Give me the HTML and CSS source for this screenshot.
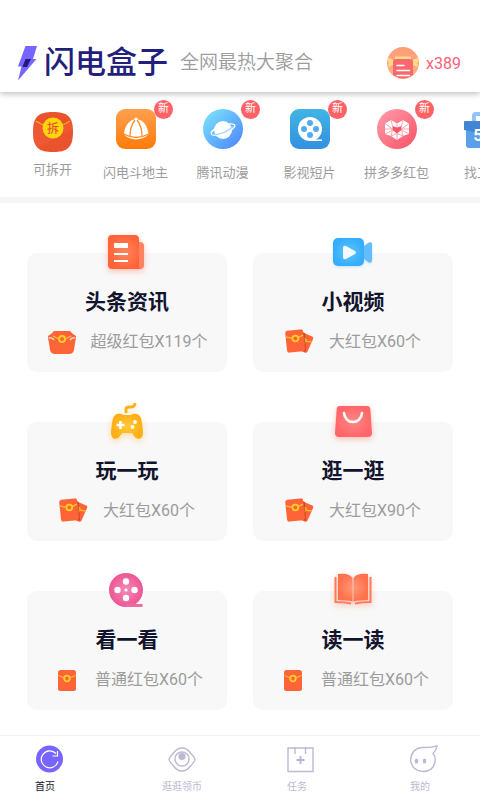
FILE: index.html
```html
<!DOCTYPE html>
<html lang="zh-CN">
<head>
<meta charset="utf-8">
<meta name="viewport" content="width=device-width, initial-scale=1">
<title>闪电盒子</title>
<link rel="stylesheet" href="styles.css">
</head>
<body>
<svg class="defs" aria-hidden="true">
  <defs>
    <linearGradient id="orange" x2="0" y2="1"><stop stop-color="#ffa04f"/><stop offset="1" stop-color="#ff7b08"/></linearGradient>
    <linearGradient id="sky" x2="1" y2="1"><stop stop-color="#7ce8fb"/><stop offset="1" stop-color="#4b82fc"/></linearGradient>
    <linearGradient id="blue" x2="0" y2="1"><stop stop-color="#41b4e5"/><stop offset="1" stop-color="#3390df"/></linearGradient>
    <linearGradient id="rose" x2="1" y2="1"><stop stop-color="#ff9eac"/><stop offset="1" stop-color="#fb5065"/></linearGradient>
    <linearGradient id="peach" x2="0" y2="1"><stop stop-color="#ff9b79"/><stop offset="1" stop-color="#ffb482"/></linearGradient>
    <radialGradient id="news"><stop stop-color="#ff8560"/><stop offset="1" stop-color="#ff6338"/></radialGradient>
    <radialGradient id="video"><stop stop-color="#5cc6ff"/><stop offset="1" stop-color="#35adfb"/></radialGradient>
    <radialGradient id="pad"><stop stop-color="#ffc935"/><stop offset="1" stop-color="#ffae16"/></radialGradient>
    <radialGradient id="bag"><stop stop-color="#ff8785"/><stop offset="1" stop-color="#ff6669"/></radialGradient>
    <radialGradient id="reel"><stop stop-color="#f58bb4"/><stop offset="1" stop-color="#ed5594"/></radialGradient>
    <radialGradient id="book"><stop stop-color="#ff9a78"/><stop offset="1" stop-color="#ff704b"/></radialGradient>
    <symbol id="packet" viewBox="0 0 18 21">
      <rect width="18" height="21" rx="2.5" fill="#ff6338"/>
      <path d="M.5 5.5Q9 10 17.500 5.500" fill="none" stroke="#fdbf2d" stroke-width="1.300"/>
      <circle cx="9" cy="8.500" r="2.800" fill="#ff6338" stroke="#ffcf27" stroke-width="1.800"/>
    </symbol>
    <symbol id="packets" viewBox="1 1 32 26">
      <g transform="translate(18 4) rotate(24) scale(.72 .84)"><rect width="18" height="21" rx="2.500" fill="#ff6338"/><path d="M0 6Q9 10 18 6" fill="none" stroke="#fdbf2d" stroke-width="1.300"/><circle cx="7" cy="8.500" r="2.800" fill="none" stroke="#ffcf27" stroke-width="1.800"/></g>
      <path d="M18 4l3 1 1 18-2 1z" fill="#a83b24" opacity=".6"/>
      <g transform="translate(1 3) rotate(-6)"><rect width="18" height="22" rx="2.500" fill="#ff6338"/><path d="M.5 6Q9 10.500 17.500 6" fill="none" stroke="#fdbf2d" stroke-width="1.300"/><circle cx="9.500" cy="8.500" r="2.900" fill="#ff6338" stroke="#ffcf27" stroke-width="1.800"/></g>
    </symbol>
  </defs>
</svg>

<header class="header">
  <svg class="bolt" viewBox="0 0 20 35" aria-hidden="true"><path d="M7.500 0H19l-4 13h3.500L0 34.500 3.500 20.500H0z" fill="#7865ff"/><path d="M7.500 13H13l-4 8H4.500z" fill="#211b79"/></svg>
  <h1 class="brand">闪电盒子</h1>
  <p class="tagline">全网最热大聚合</p>
  <a class="wallet" href="#wallet">
    <svg viewBox="0 0 32 32" width="32" height="32" aria-hidden="true"><circle cx="16" cy="16" r="16" fill="url(#peach)"/><path d="M8 9.500h16V14l4-2 3.500-1.500v4L30 16.500l1.500 3.500-3.500-1-4-2H8l-4 2-3.500 1L2 16.500.5 14.500v-4L4 12l4 2z" fill="#ffd98a"/><path d="M6 15a3 3 0 0 1 3-3h14a3 3 0 0 1 3 3v13q-10 7-20 0z" fill="#f8686d"/><path d="M10 18.500h7M10 23.500h12.500M10 28.500h12.500" stroke="#fff" stroke-width="1.500" stroke-linecap="round"/></svg>
    <span>x389</span>
  </a>
</header>

<nav class="shortcuts" aria-label="快捷入口">
  <a class="shortcut shortcut-first" href="#open">
    <svg class="app" viewBox="0 0 40 40" aria-hidden="true"><path d="M20 0C34 0 40 4 40 20s-6 20-20 20S0 36 0 20 6 0 20 0z" fill="#e9532d"/><path d="M2 10l18 11 18-11q2 4 2 8L27 24 5 36Q0 30 0 20q0-6 2-10z" fill="#f4623b" opacity=".4"/><path d="M3 9q17 12 34 0" fill="none" stroke="#fcad15" stroke-width="1.500"/><circle cx="20" cy="16" r="10.500" fill="#ffd60c"/><text x="20" y="20.500" font-size="12" font-weight="500" text-anchor="middle" fill="#e9532d">拆</text></svg>
    <span>可拆开</span>
  </a>
  <a class="shortcut" href="#ddz">
    <svg class="app" viewBox="0 0 40 40" aria-hidden="true"><rect width="40" height="40" rx="9" fill="url(#orange)"/><path d="M8 25.500C8 17 14 11 18 10.500c0-2.500 4-2.500 4 0C27 11 32 17 32.500 25.500 25 32 15 32 8 25.500z" fill="#fff"/><path d="M8 25q12 7 24.500 0M14 27c0-7 2-12 5-16M26 27c0-7-2-12-5-16" fill="none" stroke="#ff8d24" stroke-width="1.300"/></svg>
    <em class="badge">新</em><span>闪电斗地主</span>
  </a>
  <a class="shortcut" href="#comic">
    <svg class="app" viewBox="0 0 40 40" aria-hidden="true"><circle cx="20" cy="20" r="20" fill="url(#sky)"/><ellipse cx="20" cy="20.500" rx="12.500" ry="4" transform="rotate(-20 20 20.500)" fill="none" stroke="#fff" stroke-width="1.300"/><circle cx="20" cy="21" r="9" fill="#fff"/><path d="M9 25.500q11 1 21-8" fill="none" stroke="#a7d6fc" stroke-width="1.200"/></svg>
    <em class="badge">新</em><span>腾讯动漫</span>
  </a>
  <a class="shortcut" href="#film">
    <svg class="app" viewBox="0 0 40 40" aria-hidden="true"><rect width="40" height="40" rx="9" fill="url(#blue)"/><circle cx="20" cy="20" r="12" fill="#fff"/><path d="M20 31.200h12" stroke="#fff" stroke-width="1.600"/><g fill="#52aaf1"><circle cx="20" cy="14" r="3"/><circle cx="20" cy="26" r="3"/><circle cx="14" cy="20" r="3"/><circle cx="26" cy="20" r="3"/></g></svg>
    <em class="badge">新</em><span>影视短片</span>
  </a>
  <a class="shortcut" href="#pdd">
    <svg class="app" viewBox="0 0 40 40" aria-hidden="true"><circle cx="20" cy="20" r="20" fill="url(#rose)"/><path d="M8 14.500l6-3.500 6 3.500 6-3.500 6 3.500V25l-6 2-6 4-6-4-6-2z" fill="#fff"/><path d="M15.500 17l4.500 1.500 4.500-1.500v4L20 24.500 15.500 21z" fill="#f95468"/><path d="M8 20h7.500L8 14.500M32 20h-7.500L32 14.500M14 11l1.500 6M26 11l-1.500 6M8 25l7.500-4L14 27l6-2.500 6 2.500-1.500-6 7.500 4M20 14.500v4M20 24.500V31" fill="none" stroke="#fc8f9d" stroke-width=".8"/></svg>
    <em class="badge">新</em><span>拼多多红包</span>
  </a>
  <a class="shortcut" href="#job">
    <svg class="app" viewBox="0 0 40 40" aria-hidden="true"><path d="M10 12V7q0-2 2-2h16q2 0 2 2v5" fill="none" stroke="#91c4fa" stroke-width="4"/><path d="M2 14h36v22q0 3-3 3H5q-3 0-3-3z" fill="#59a0ea"/><path d="M0 13q0-1 1-1h38q1 0 1 1v10H10L0 21z" fill="#4285d3"/><text x="19" y="32" font-size="17" font-weight="700" text-anchor="middle" fill="#fff">58</text></svg>
    <span>找工作</span>
  </a>
</nav>

<main class="cards">
  <a class="card" href="#news">
    <svg class="hero glow-red" viewBox="1 0 44 44" aria-hidden="true"><path d="M30 11h6q4 0 4 4v19q0 4-4 4h-6z" fill="#ff8360"/><path d="M8 4h23q4 0 4 4v26q0 4 3 4H8q-4 0-4-4V8q0-4 4-4z" fill="url(#news)"/><path d="M10 12h14v5H10zM10 22h14v2H10zM10 29h14v2H10z" fill="#fff"/></svg>
    <h2>头条资讯</h2>
    <p><svg class="reward" viewBox="0 0 32 26" aria-hidden="true"><path d="M8 2h16l3 3 3 2q0 3-1 7l-1 7q-1 4-5 4H9q-4 0-5-4l-1-7Q2 10 2 7l3-2z" fill="#ff6338"/><path d="M3 9q3-1 5 2M29 9q-3-1-5 2" stroke="#ffd9cd" stroke-width="1.600" fill="none"/><path d="M7 7q9 6 18 0" fill="none" stroke="#fdbf2d" stroke-width="1.500"/><circle cx="16" cy="10" r="3" fill="#ff6338" stroke="#ffcf27" stroke-width="1.800"/></svg><span>超级红包X119个</span></p>
  </a>
  <a class="card" href="#video">
    <svg class="hero glow-blue" viewBox="1 0 44 44" aria-hidden="true"><path d="M33 16l5-4q4-2 4 1v16q0 4-4 2l-5-4z" fill="#65bcfc"/><rect x="3" y="7" width="31" height="28" rx="5" fill="url(#video)"/><path d="M13 17q0-3 3-2l9 5q2 1.500 0 3l-9 5q-3 1-3-2z" fill="#f2fbff"/></svg>
    <h2>小视频</h2>
    <p><svg class="reward" aria-hidden="true"><use href="#packets"/></svg><span>大红包X60个</span></p>
  </a>
  <a class="card" href="#play">
    <svg class="hero glow-yellow" viewBox="0 0 44 44" aria-hidden="true"><path d="M21 13V9q0-2 3-2h2q4 0 4-4" fill="none" stroke="#ffaf19" stroke-width="2.800"/><path d="M12 14q4-1 6 1h8q2-2 6-1 4 1 5 9l1 9q0 6-4 7-3 0-5-3l-2-3H17l-2 3q-2 3-5 3-4-1-4-7l1-9q1-8 5-9z" fill="url(#pad)"/><path d="M15.500 21v8M11.500 25h8" stroke="#fff" stroke-width="2.600"/><circle cx="30" cy="22" r="1.900" fill="#fff"/><circle cx="27.500" cy="27" r="1.900" fill="#fff"/></svg>
    <h2>玩一玩</h2>
    <p><svg class="reward" aria-hidden="true"><use href="#packets"/></svg><span>大红包X60个</span></p>
  </a>
  <a class="card" href="#shop">
    <svg class="hero glow-red" viewBox="0 0 44 44" aria-hidden="true"><path d="M9 6h27q3 0 3.300 3L41 33q0 4-4 4H8q-4 0-4-4L5.700 9q0-3 3.300-3z" fill="url(#bag)"/><path d="M13 13c1 12 17 12 18 0" fill="none" stroke="#fff" stroke-width="2.600" stroke-linecap="round"/></svg>
    <h2>逛一逛</h2>
    <p><svg class="reward" aria-hidden="true"><use href="#packets"/></svg><span>大红包X90个</span></p>
  </a>
  <a class="card" href="#watch">
    <svg class="hero" viewBox="1 0 44 44" aria-hidden="true"><circle cx="22" cy="21" r="17" fill="url(#reel)"/><path d="M22 35h16.500v3H22z" fill="#ee6aa0"/><g fill="#fff"><circle cx="22" cy="12.500" r="3.200"/><circle cx="22" cy="29" r="3.200"/><circle cx="13.500" cy="21" r="3.200"/><circle cx="30.500" cy="21" r="3.200"/><circle cx="22" cy="21" r="1.600"/></g></svg>
    <h2>看一看</h2>
    <p><svg class="reward" aria-hidden="true"><use href="#packet" x="7" y="3" width="18" height="21"/></svg><span>普通红包X60个</span></p>
  </a>
  <a class="card" href="#read">
    <svg class="hero glow-red" viewBox="1 0 44 44" aria-hidden="true"><path d="M8 5q11-1 14.500 4v23.500Q18 31 8 31zM38 5Q27 4 23.500 9v23.500Q28 31 38 31z" fill="url(#book)"/><path d="M5.500 8v25q9 0 15.500 1.500M40.500 8v25q-9 0-15.500 1.500" fill="none" stroke="#ff7b56" stroke-width="2"/></svg>
    <h2>读一读</h2>
    <p><svg class="reward" aria-hidden="true"><use href="#packet" x="7" y="3" width="18" height="21"/></svg><span>普通红包X60个</span></p>
  </a>
</main>

<nav class="tabs" aria-label="主导航">
  <a class="tab active" href="#home">
    <svg viewBox="0 0 28 28" aria-hidden="true"><circle cx="14.500" cy="14" r="13.500" fill="#7865ff"/><path d="M21 8.500a8.500 8.500 0 1 0 2 8M22.500 6v5H17.500" fill="none" stroke="#fff" stroke-width="1.200"/></svg>
    <span>首页</span>
  </a>
  <a class="tab tab-center" href="#earn">
    <svg viewBox="0 0 28 28" aria-hidden="true"><g fill="none" stroke="#bcb9d3" stroke-width="1.400"><path d="M1 14.500Q1 13 5 8.500 9 3 14 3t9 5.500q4 4.500 4 6t-4 6Q19 26 14 26t-9-5.500Q1 16 1 14.500z"/><circle cx="14" cy="14" r="7"/></g><circle cx="14" cy="11.500" r="3.600" fill="#bcb9d3"/></svg>
    <span>逛逛领币</span>
  </a>
  <a class="tab" href="#tasks">
    <svg viewBox="0 0 28 28" aria-hidden="true"><path d="M1 3h25v23.500H1zM8 2v7M18.500 2v7" fill="none" stroke="#bcb9d3" stroke-width="1.400"/><path d="M13.500 11v8M9.500 15h8" stroke="#b5b1d0" stroke-width="1.800"/></svg>
    <span>任务</span>
  </a>
  <a class="tab" href="#me">
    <svg viewBox="1 0 28 28" aria-hidden="true"><path d="M28 .8Q27.500 5 24 8.500 27 12 26 17q-2 9.500-12.500 9.500-10.500-1-11.800-11Q2 4 12.500 2.500C17.500 2.500 22 3 28 .8z" fill="none" stroke="#bcb9d3" stroke-width="1.400" stroke-linejoin="round"/><ellipse cx="7.500" cy="16" rx="1.800" ry="2.600" fill="#bcb9d3"/><ellipse cx="15.500" cy="16" rx="1.800" ry="2.600" fill="#bcb9d3"/></svg>
    <span>我的</span>
  </a>
</nav>
</body>
</html>
```
FILE: styles.css
```css
* {
  box-sizing: border-box;
}

body {
  display: flex;
  flex-direction: column;
  min-height: 100vh;
  margin: 0;
  background: #fff;
  color: #9c9c9c;
  font-family: Roboto, "Noto Sans CJK SC", sans-serif;
}

h1, h2, p {
  margin: 0;
}

a {
  color: inherit;
  text-decoration: none;
}

svg {
  display: block;
  flex: none;
}

.defs {
  position: absolute;
  width: 0;
  height: 0;
}

.header {
  display: flex;
  align-items: center;
  padding: 34px 19px 0 18px;
  height: 92px;
  background: #fff;
  box-shadow: 0 2px 6px rgba(0, 0, 0, 0.25);
}

.bolt {
  width: 20px;
  height: 35px;
}

.brand {
  margin-left: 6px;
  color: #231f7c;
  font-size: 31px;
  font-weight: 500;
  line-height: 36px;
  white-space: nowrap;
}

.tagline {
  margin-left: 12px;
  font-size: 19px;
  font-weight: 350;
  line-height: 24px;
  white-space: nowrap;
}

.wallet {
  display: flex;
  align-items: center;
  gap: 7px;
  margin-left: auto;
  color: #f8617a;
  font-size: 16px;
}

.shortcuts {
  display: flex;
  padding: 0 0 0 13px;
  height: 111px;
  border-bottom: 6px solid #f5f6f8;
  overflow: hidden;
}

.shortcut {
  position: relative;
  display: flex;
  flex: none;
  flex-direction: column;
  align-items: center;
  gap: 14px;
  width: 87px;
  padding-top: 17px;
  font-size: 13px;
  line-height: 20px;
}

.shortcut-first {
  gap: 8px;
  width: 79px;
  padding-top: 20px;
}

.app {
  width: 40px;
  height: 40px;
}

.badge {
  position: absolute;
  top: 8px;
  right: 6px;
  width: 19px;
  height: 19px;
  border-radius: 50%;
  background: #ff6264;
  color: #fff;
  font-size: 11px;
  font-style: normal;
  line-height: 18px;
  text-align: center;
}

.cards {
  display: grid;
  flex: 1;
  grid-template-columns: 1fr 1fr;
  align-content: start;
  gap: 50px 26px;
  padding: 50px 27px 24px;
}

.card {
  display: flex;
  flex-direction: column;
  align-items: center;
  padding-bottom: 17px;
  border-radius: 10px;
  background: #f8f8f8;
}

.hero {
  width: 44px;
  height: 44px;
  margin-top: -22px;
}

.glow-red {
  filter: drop-shadow(0 2px 3px rgba(255, 100, 70, 0.4));
}

.glow-blue {
  filter: drop-shadow(0 1px 1px rgba(60, 175, 250, 0.3));
}

.glow-yellow {
  filter: drop-shadow(0 2px 3px rgba(255, 175, 30, 0.4));
}

.card h2 {
  margin-top: 12px;
  color: #12142d;
  font-size: 21px;
  font-weight: 700;
  line-height: 30px;
}

.card p {
  display: flex;
  align-items: center;
  gap: 12px;
  margin-top: 12px;
  font-size: 16px;
  font-weight: 400;
  line-height: 26px;
}

.reward {
  width: 32px;
  height: 26px;
}

.tabs {
  position: sticky;
  bottom: 0;
  display: grid;
  grid-template-columns: 127fr 125fr 123fr 70fr;
  padding: 9px 0 6px 35px;
  border-top: 1px solid #f1f1f3;
  background: #fff;
  color: #bcb9d3;
  font-size: 10px;
  line-height: 14px;
}

.tab {
  display: flex;
  flex-direction: column;
  align-items: flex-start;
  justify-self: start;
  gap: 7px;
}

.tab-center {
  align-items: center;
}

.tab svg {
  width: 28px;
  height: 28px;
}

.active {
  color: #12142d;
}
```
